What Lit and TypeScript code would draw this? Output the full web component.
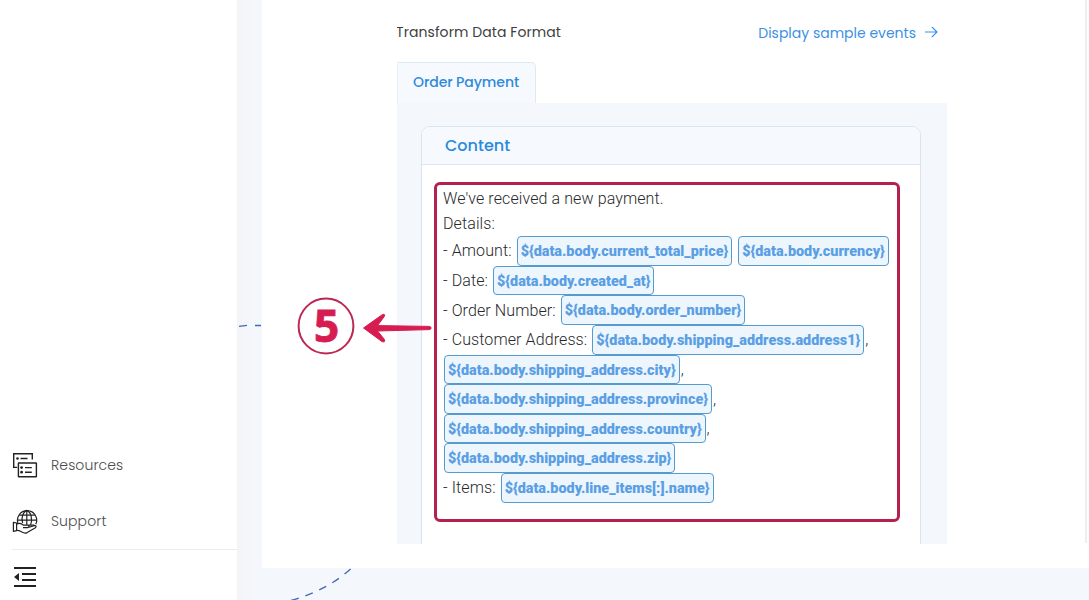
import { LitElement, html, css, svg } from "lit";
import { customElement } from "lit/decorators.js";

type Part = { text?: string; chip?: string };

const LINES: Part[][] = [
  [{ text: "- Amount:" }, { chip: "${data.body.current_total_price}" }, { chip: "${data.body.currency}" }],
  [{ text: "- Date:" }, { chip: "${data.body.created_at}" }],
  [{ text: "- Order Number:" }, { chip: "${data.body.order_number}" }],
  [{ text: "- Customer Address:" }, { chip: "${data.body.shipping_address.address1}" }, { text: "," }],
  [{ chip: "${data.body.shipping_address.city}" }, { text: "," }],
  [{ chip: "${data.body.shipping_address.province}" }, { text: "," }],
  [{ chip: "${data.body.shipping_address.country}" }, { text: "," }],
  [{ chip: "${data.body.shipping_address.zip}" }],
  [{ text: "- Items:" }, { chip: "${data.body.line_items[:].name}" }],
];

const resourcesIcon = svg`
  <svg width="26" height="26" viewBox="0 0 26 26" fill="none" stroke="#222" stroke-width="1.4">
    <path d="M5.2 15.4H1.7V1.8H20.3V7.6" />
    <rect x="6.4" y="11" width="18" height="13.8" rx=".4" />
    <path d="M8.5 6.5H15.5M13 15.6H19.8M13 20.2H19.8" />
    <g fill="#222" stroke="none">
      <circle cx="5.5" cy="6.5" r="1.3" />
      <circle cx="9.6" cy="15.6" r="1.4" />
      <circle cx="9.6" cy="20.2" r="1.4" />
    </g>
  </svg>`;

const supportIcon = svg`
  <svg width="26" height="26" viewBox="0 0 26 26" fill="none" stroke="#222" stroke-width="1.2" stroke-linejoin="round">
    <path d="M6 15.4A9.6 9.6 0 1 1 23.8 16.2" />
    <path d="M10.6 15C9 9.6 10.8 4 14.8 2.4C19 4 21 11 18.4 17.6M14.8 2.4V17M7 7.2H22.8M5.3 12.2H24.4M16.5 17.2H22.4" />
    <path d="M1.4 14.4L4.6 15V22.6L1.4 23.4ZM4.6 16.2C7.4 14.4 9.8 15.6 11.6 17.2H15.8C17.6 17.4 17.2 19.4 15.6 19.6H11M17 19.2L22.2 17.6C24.4 17.2 24.6 19 23 20L15.2 24.6C13.6 25.4 11.6 25 9.8 24L7.6 22.8L4.6 22.2" />
  </svg>`;

const collapseIcon = svg`
  <svg width="22" height="20" viewBox="0 0 22 20" fill="#222">
    <path d="M0 0H22V2H0ZM8 6H22V8H8ZM8 12H22V14H8ZM0 18H22V20H0ZM0 10L5 6V14Z" />
  </svg>`;

@customElement("app-root")
export class AppRoot extends LitElement {
  static styles = css`
    :host { display: block; font-family: Poppins, Inter, sans-serif; }
    * { box-sizing: border-box; }
    .page { position: relative; display: flex; width: 1089px; height: 600px; overflow: hidden; background: #f5f8fd; }
    .side { width: 237px; background: #fff; display: flex; flex-direction: column; justify-content: flex-end; flex: none; }
    .item { display: flex; align-items: center; height: 56px; padding-left: 12px; color: #4b4b4d; font-size: 14px; font-weight: 300; }
    .item svg { margin-right: 13px; flex: none; }
    .resources { letter-spacing: 0.1px; }
    .support { letter-spacing: 0.1px; }
    .collapse { height: 51px; margin-left: 12px; border-top: 1px solid #ececee; padding: 17px 0 0 2px; }
    .collapse svg, .item svg { display: block; }
    .work { flex: 1; display: flex; padding-left: 25px; background: linear-gradient(90deg, #f3f4f6 0, #f4f6fa 8px, #f4f7fc 16px); }
    .card { width: 827px; height: 568px; background: #fff; display: flex; justify-content: space-between; }
    .edge { width: 2px; height: 543px; margin-right: 2px; background: #eeeef0; }
    .form { width: 550px; margin-left: 135px; height: 544px; display: flex; flex-direction: column; overflow: hidden; }
    .top { height: 62px; flex: none; display: flex; justify-content: space-between; padding: 20px 9px 0 0; }
    .title { font-size: 14px; line-height: 24px; color: #3e3e42; letter-spacing: 0.08px; margin-left: -1px; }
    .link { display: flex; align-items: center; gap: 9px; height: 26px; font-size: 14px; color: #3d91e2; }
    .tab { width: 139px; height: 41px; flex: none; border: 1px solid #dfe9f3; border-left-color: #e9f0f8; border-bottom: 0; border-top-right-radius: 5px; background: #f6f9fe; color: #2e8ada; font-size: 14px; font-weight: 500; line-height: 39px; padding-left: 15px; letter-spacing: -0.07px; white-space: nowrap; }
    .panel { flex: 1; background: #f4f8fd; padding: 23px 26px 0 24px; min-height: 0; }
    .content { height: 440px; border: 1px solid #d7e5f1; border-radius: 9px 9px 0 0; background: #fff; overflow: hidden; }
    .head { height: 38px; background: #f6fafe; border-bottom: 1px solid #d9e6f0; padding-left: 23px; line-height: 38px; font-size: 16px; font-weight: 500; color: #2c89da; }
    .body { padding: 17px 0 0 12px; }
    .editor { width: 466px; height: 340px; border: 3px solid #b4214f; border-radius: 6px; padding: 1px 0 0 6px; font-family: Roboto, sans-serif; font-weight: 300; color: #28282a; letter-spacing: 0.1px; }
    .plain { height: 25px; line-height: 25px; font-size: 16px; }
    .line { display: flex; align-items: center; height: 29.65px; font-size: 16px; white-space: pre; }
    .label { margin-right: 5px; }
    .lead { margin-left: 1px; }
    .chip { height: 29.65px; border: 1px solid #559bd0; border-radius: 4px; background: #edf5fd; color: #5a9fe4; font-size: 14.4px; font-weight: 900; letter-spacing: 0; line-height: 29.4px; padding: 0 3px; }
    .chip + .chip { margin-left: 6px; }
    .comma { margin-left: 1px; }
    .marks { position: absolute; left: 0; top: 0; pointer-events: none; }
    .number { font: 700 44px "Open Sans", sans-serif; }
  `;

  private part(p: Part, i: number) {
    if (p.chip) return html`<span class="chip ${i === 0 ? "lead" : ""}">${p.chip}</span>`;
    return html`<span class=${p.text === "," ? "comma" : "label"}>${p.text}</span>`;
  }

  render() {
    return html`
      <div class="page">
        <nav class="side">
          <div class="item">${resourcesIcon}<span class="resources">Resources</span></div>
          <div class="item">${supportIcon}<span class="support">Support</span></div>
          <div class="collapse">${collapseIcon}</div>
        </nav>
        <main class="work">
          <section class="card">
            <div class="form">
              <div class="top">
                <span class="title">Transform Data Format</span>
                <span class="link"><span class="linktext">Display sample events</span>
                  <svg width="13" height="12" viewBox="0 0 13 12" fill="none" stroke="#3d91e2" stroke-width="1.2"><path d="M0 5H12M6.8 -.2L12 5L6.8 10.2" /></svg>
                </span>
              </div>
              <div class="tab"><span class="tabtext">Order Payment</span></div>
              <div class="panel">
                <div class="content">
                  <div class="head">Content</div>
                  <div class="body">
                    <div class="editor">
                      <div class="plain first">We've received a new payment.</div>
                      <div class="plain">Details:</div>
                      ${LINES.map((l) => html`<div class="line">${l.map((p, i) => this.part(p, i))}</div>`)}
                    </div>
                  </div>
                </div>
              </div>
            </div>
            <div class="edge"></div>
          </section>
        </main>
        <svg class="marks" width="1089" height="600" viewBox="0 0 1089 600" fill="none">
          <path d="M239 326.3L247 325.4M255 325.5H261" stroke="#4569b5" stroke-width="1.3" />
          <path d="M291 600.5Q328 590 351 568.5" stroke="#4569b5" stroke-width="1.3" stroke-dasharray="8 7" />
          <circle cx="326" cy="326" r="27.4" stroke="#bd2853" stroke-width="2" />
          <text class="number" x="326.5" y="341.5" text-anchor="middle" fill="#d61c51" stroke="#d61c51" stroke-width=".9">5</text>
          <path d="M363.5 328L382.5 314.5Q385.5 313.5 384.3 316.5L377.5 325.6L430 326.4Q432.5 328 430 329.6L377.5 331L384.5 339.5Q385.5 342.8 382 341.6Z" fill="#d61c51" stroke="#d61c51" stroke-width="1" stroke-linejoin="round" />
        </svg>
      </div>
    `;
  }
}
